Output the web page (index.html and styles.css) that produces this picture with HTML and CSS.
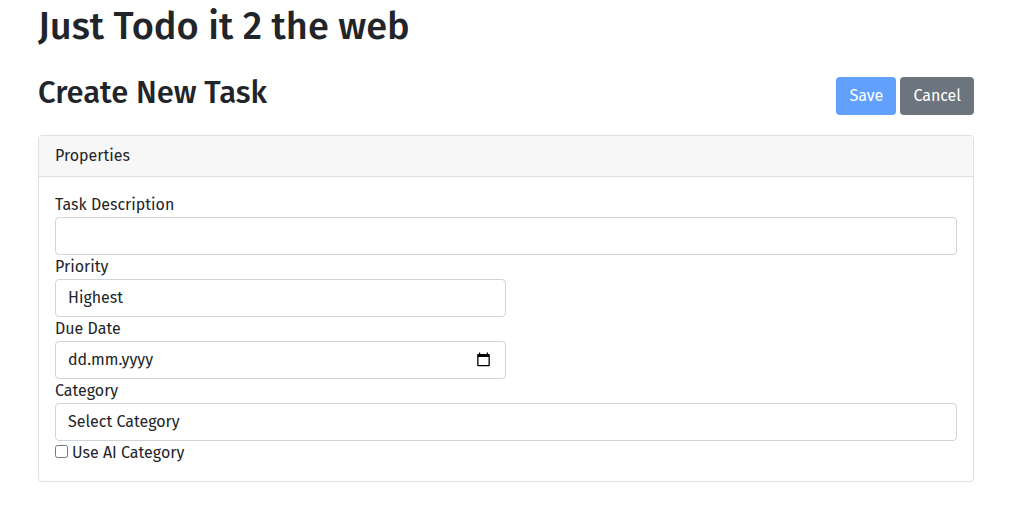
FILE: index.html
```html
<!DOCTYPE html>
<html lang="en">
<head>
<meta charset="utf-8">
<meta name="viewport" content="width=device-width, initial-scale=1">
<title>Just Todo it 2 the web</title>
<link rel="stylesheet" href="styles.css">
</head>
<body>
<main class="page">
  <h1 class="title">Just Todo it 2 the web</h1>
  <form class="task-form">
    <header class="toolbar">
      <h2 class="subtitle">Create New Task</h2>
      <div class="actions">
        <button class="btn btn-primary" type="submit" disabled>Save</button>
        <button class="btn btn-secondary" type="button">Cancel</button>
      </div>
    </header>
    <section class="card">
      <div class="card-header">Properties</div>
      <div class="card-body">
        <div class="field">
          <label for="description">Task Description</label>
          <input class="control" id="description" type="text">
        </div>
        <div class="field field-half">
          <label for="priority">Priority</label>
          <select class="control" id="priority"><option>Highest</option></select>
        </div>
        <div class="field field-half">
          <label for="due">Due Date</label>
          <div class="date">
            <input class="control" id="due" type="text" value="dd.mm.yyyy">
            <button class="date-button" type="button" aria-label="Show date picker">
              <svg width="15" height="15" viewBox="0 0 15 15" aria-hidden="true"><path d="M3 .5h1.200v1.500h6.600V.5H12V2h1q.8 0 .8.800V13.500q0 .8-.8.800H2q-.8 0-.8-.8V2.800q0-.8.8-.8h1zM2.500 5v8h10V5z"/></svg>
            </button>
          </div>
        </div>
        <div class="field">
          <label for="category">Category</label>
          <select class="control" id="category"><option>Select Category</option></select>
        </div>
        <div class="check">
          <input class="checkbox" id="ai" type="checkbox">
          <label for="ai">Use AI Category</label>
        </div>
      </div>
    </section>
  </form>
</main>
</body>
</html>
```
FILE: styles.css
```css
*, *::before, *::after { box-sizing: border-box; }
body {
  margin: 0;
  background: #fff;
  color: #212529;
  font: 400 16px/24px "Fira Sans", "Noto Sans", sans-serif;
}
button, input, select { font: inherit; color: inherit; margin: 0; }
.page { padding: 3px 46px 32px 38px; }
.title, .subtitle { margin: 0; font-weight: 500; }
.title { font-size: 38px; line-height: 46px; }
.toolbar {
  display: flex;
  justify-content: space-between;
  align-items: flex-start;
  margin: 26px 0 20px;
}
.subtitle { font-size: 31px; line-height: 36px; }
.actions { display: flex; gap: 4px; padding-top: 2px; }
.btn {
  height: 38px;
  min-width: 60px;
  padding: 0 13px;
  border: 0;
  border-radius: 4px;
  color: #fff;
}
.btn-primary { background: #0d6efd; opacity: .65; }
.btn-secondary { background: #6c757d; }
.card { border: 1px solid #dfdfdf; border-radius: 4px; }
.card-header {
  padding: 8px 16px;
  background: #f7f7f7;
  border-bottom: 1px solid #dfdfdf;
}
.card-body { padding: 16px; }
.field label { display: block; }
.field-half { width: 50%; }
.control {
  display: block;
  width: 100%;
  height: 38px;
  padding: 6px 12px;
  border: 1px solid #ced4da;
  border-radius: 4px;
  background: #fff;
  appearance: none;
}
input.control { padding: 5px 12px 7px; }
.date { position: relative; }
.date-button {
  position: absolute;
  top: 11px;
  right: 15px;
  display: flex;
  padding: 0;
  border: 0;
  background: none;
  color: #000;
}
.check { display: flex; gap: 4px; }
.checkbox { width: 13px; height: 13px; margin-top: 4px; }
```
